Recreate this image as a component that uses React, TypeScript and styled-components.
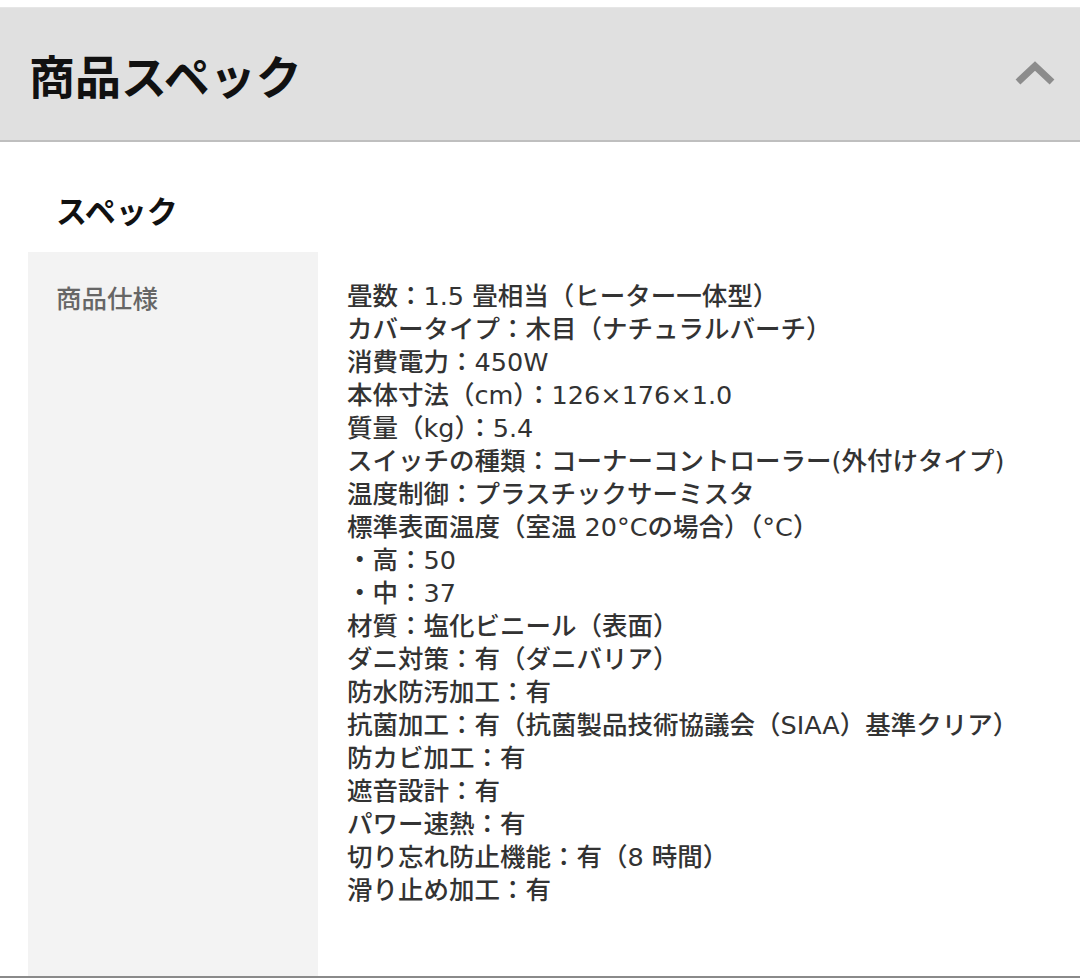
import React from "react";
import styled, { createGlobalStyle } from "styled-components";

const Global = createGlobalStyle`
  html, body { margin: 0; padding: 0; background: #ffffff; }
  body { font-family: "Noto Sans CJK JP", "Noto Sans", sans-serif; }
`;

const Page = styled.div`
  width: 1080px;
  height: 978px;
  overflow: hidden;
  padding-top: 7px;
  box-sizing: border-box;
  display: flex;
  flex-direction: column;
`;

const Header = styled.div`
  height: 135px;
  flex-shrink: 0;
  box-sizing: border-box;
  border-top: 1px solid #e6e6e6;
  border-bottom: 2px solid #bfbfbf;
  background: #e0e0e0;
  display: flex;
  align-items: center;
  justify-content: space-between;
  padding: 0 24px 0 29px;
`;

const Title = styled.h1`
  margin: 0;
  font-family: "Noto Sans CJK JP", sans-serif;
  font-size: 46px;
  font-weight: 700;
  color: #111;
`;

const Chevron = styled.svg`
  width: 42px;
  height: 28px;
  display: block;
`;

const Body = styled.div`
  flex: 1;
  display: flex;
  flex-direction: column;
  padding: 0 28px;
`;

const SubHeading = styled.h2`
  margin: 48px 0 22px 28px;
  font-family: "Noto Sans CJK JP", sans-serif;
  font-size: 31px;
  line-height: 40px;
  font-weight: 700;
  color: #111;
`;

const Table = styled.div`
  flex: 1;
  display: grid;
  grid-template-columns: 290px 1fr;
`;

const LabelCell = styled.div`
  background: #f3f3f3;
  padding: 28px 0 0 28px;
  font-family: "Noto Sans CJK JP", sans-serif;
  font-size: 25.5px;
  line-height: 33px;
  font-weight: 500;
  color: #666;
`;

const ValueCell = styled.div`
  padding: 28px 0 0 29px;
  display: flex;
  flex-direction: column;
`;

const Line = styled.div`
  font-family: "DejaVu Sans", "Noto Sans CJK JP", sans-serif;
  font-size: 25.5px;
  line-height: 33px;
  font-weight: 500;
  color: #333;
  white-space: nowrap;
`;

const BottomRule = styled.div`
  height: 2px;
  flex-shrink: 0;
  background: #8a8a8a;
`;

const specs = [
  "畳数：1.5 畳相当（ヒーター一体型）",
  "カバータイプ：木目（ナチュラルバーチ）",
  "消費電力：450W",
  "本体寸法（cm）：126×176×1.0",
  "質量（kg）：5.4",
  "スイッチの種類：コーナーコントローラー(外付けタイプ)",
  "温度制御：プラスチックサーミスタ",
  "標準表面温度（室温 20°Cの場合）（°C）",
  "・高：50",
  "・中：37",
  "材質：塩化ビニール（表面）",
  "ダニ対策：有（ダニバリア）",
  "防水防汚加工：有",
  "抗菌加工：有（抗菌製品技術協議会（SIAA）基準クリア）",
  "防カビ加工：有",
  "遮音設計：有",
  "パワー速熱：有",
  "切り忘れ防止機能：有（8 時間）",
  "滑り止め加工：有",
];

export default function App() {
  return (
    <>
      <Global />
      <Page>
        <Header>
          <Title>商品スペック</Title>
          <Chevron viewBox="0 0 42 28">
            <polyline
              points="4,22 21,6 38,22"
              fill="none"
              stroke="#8c8c8c"
              strokeWidth="7"
              strokeLinejoin="miter"
            />
          </Chevron>
        </Header>
        <Body>
          <SubHeading>スペック</SubHeading>
          <Table>
            <LabelCell>商品仕様</LabelCell>
            <ValueCell>
              {specs.map((s, i) => (
                <Line key={i}>{s}</Line>
              ))}
            </ValueCell>
          </Table>
        </Body>
        <BottomRule />
      </Page>
    </>
  );
}
